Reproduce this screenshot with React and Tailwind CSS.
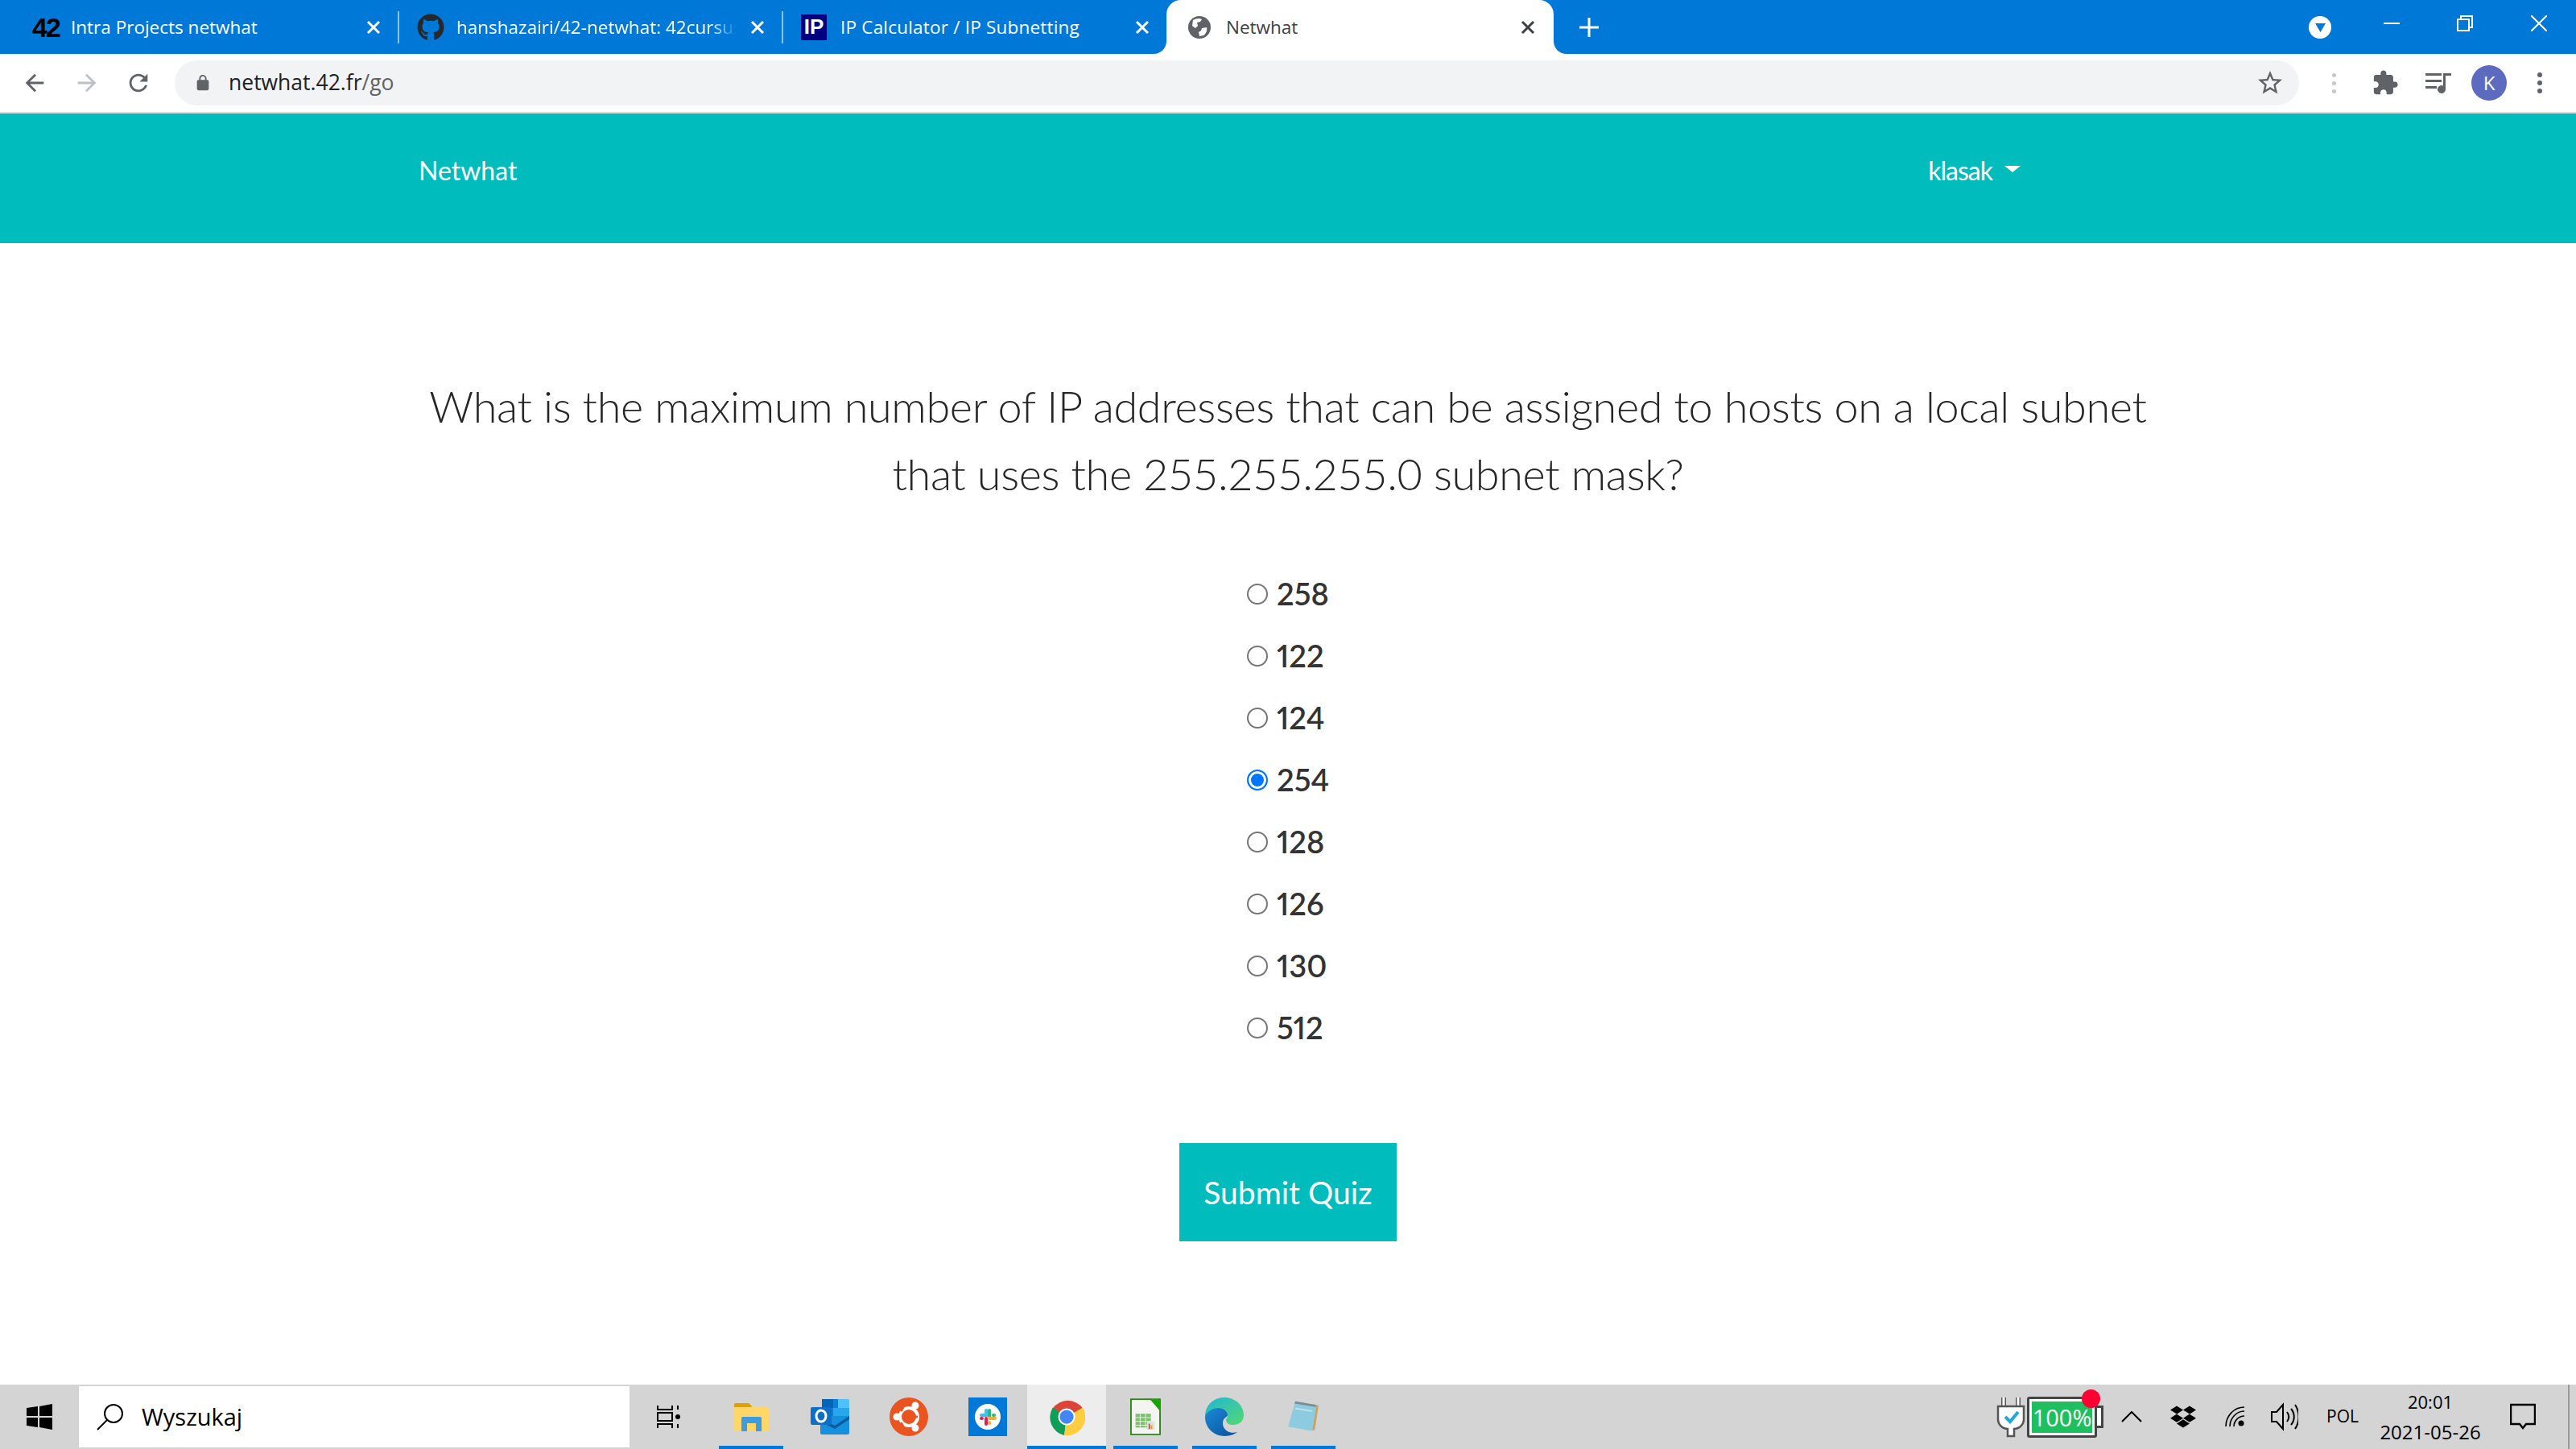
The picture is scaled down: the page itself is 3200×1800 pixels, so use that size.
import { FaGithub, FaDropbox } from 'react-icons/fa';

const options = [
  { value: '258' },
  { value: '122' },
  { value: '124' },
  { value: '254', checked: true },
  { value: '128' },
  { value: '126' },
  { value: '130' },
  { value: '512' },
];

const Mat = ({ d, className }) => (
  <svg viewBox="0 0 24 24" className={className} fill="currentColor">
    <path d={d} />
  </svg>
);

const TabClose = ({ className }) => (
  <svg viewBox="0 0 20 20" className={`w-[20px] h-[20px] ${className}`} fill="none" stroke="currentColor" strokeWidth="3">
    <path d="M3 3l14 14M17 3L3 17" />
  </svg>
);

const GlobeIcon = () => (
  <svg viewBox="0 0 28 28" className="w-[28px] h-[28px]">
    <circle cx="14" cy="14" r="14" fill="#5f6368" />
    <path d="M6 5c3-2 8-3 11-1l-2 3-4 1 1 4-3 3-4-3zM17 15l6-1c1 4-1 8-4 10l-5 1-1-5 3-2z" fill="#fff" />
  </svg>
);

const Tab = ({ width, pad, icon, title, fade, sep, textLeft, closeRight }) => (
  <div className={`relative flex items-center h-[67px] shrink-0 ${width} ${pad}`}>
    {icon}
    <span className={`overflow-hidden whitespace-nowrap text-white text-[22.5px] font-['Open_Sans',sans-serif] ${textLeft} ${fade ? 'w-[348px] [mask-image:linear-gradient(to_right,black_90%,transparent)]' : ''}`}>
      {title}
    </span>
    <TabClose className={`ml-auto text-white ${closeRight}`} />
    {sep && <div className="w-[2px] h-[40px] bg-[#8cc4ef] shrink-0" />}
  </div>
);

const TabStrip = () => (
  <div className="flex items-center h-[67px] bg-[#0078d7] shrink-0">
    <Tab
      width="w-[496px]"
      pad="pl-[40px]"
      textLeft="ml-[16px]"
      closeRight="mr-[20px]"
      sep
      title="Intra Projects netwhat"
      icon={<span className="w-[32px] text-center text-black text-[34px] leading-none font-black font-['Liberation_Sans',sans-serif] tracking-[-2px]">42</span>}
    />
    <Tab
      width="w-[477px]"
      pad="pl-[22px]"
      textLeft="ml-[15px]"
      closeRight="mr-[20px]"
      sep
      fade
      title="hanshazairi/42-netwhat: 42cursus"
      icon={<FaGithub className="w-[34px] h-[34px] text-[#24292e] shrink-0" />}
    />
    <Tab
      width="w-[476px]"
      pad="pl-[22px]"
      textLeft="ml-[17px] tracking-[0.2px]"
      closeRight="mr-[20px]"
      title="IP Calculator / IP Subnetting"
      icon={
        <span className="flex items-center justify-center w-[32px] h-[32px] bg-[#000080] text-white text-[26px] font-bold font-['Liberation_Sans',sans-serif] shrink-0">
          IP
        </span>
      }
    />
    <div className="relative flex items-center w-[481px] h-[67px] pl-[27px] bg-white rounded-t-[18px] shrink-0">
      <svg viewBox="0 0 16 16" className="absolute left-[-16px] bottom-0 w-[16px] h-[16px]">
        <path d="M16 0v16H0C9 16 16 9 16 0z" fill="#fff" />
      </svg>
      <svg viewBox="0 0 16 16" className="absolute right-[-16px] bottom-0 w-[16px] h-[16px]">
        <path d="M0 0v16h16C7 16 0 9 0 0z" fill="#fff" />
      </svg>
      <GlobeIcon />
      <span className="ml-[19px] text-[#3c4043] text-[22.5px] font-['Open_Sans',sans-serif]">Netwhat</span>
      <TabClose className="ml-auto mr-[22px] text-[#3c4043]" />
    </div>
    <svg viewBox="0 0 24 24" className="ml-[32px] w-[24px] h-[24px] text-white" fill="currentColor">
      <path d="M10.5 0h3v10.5H24v3H13.5V24h-3V13.5H0v-3h10.5z" />
    </svg>
    <div className="ml-auto flex items-center h-full">
      <div className="flex items-center justify-center w-[28px] h-[28px] rounded-full bg-white">
        <svg viewBox="0 0 14 12" className="w-[13px] h-[11px] mt-[2px]">
          <path d="M0 0h14L7 12z" fill="#0078d7" />
        </svg>
      </div>
      <div className="w-[20px] h-[2px] ml-[65px] mb-[10px] bg-white" />
      <svg viewBox="0 0 20 20" className="w-[20px] h-[20px] ml-[71px] mb-[10px]" fill="none" stroke="#fff" strokeWidth="2">
        <path d="M1 5h14v14H1zM5 5V1h14v14h-4" />
      </svg>
      <svg viewBox="0 0 20 20" className="w-[20px] h-[20px] ml-[72px] mr-[36px] mb-[10px]" fill="none" stroke="#fff" strokeWidth="2">
        <path d="M0 0l20 20M20 0L0 20" />
      </svg>
    </div>
  </div>
);

const Toolbar = () => (
  <div className="flex items-center h-[74px] bg-white border-b-2 border-[#dadce0] shrink-0">
    <Mat className="w-[34px] h-[34px] ml-[26px] text-[#5f6368]" d="M20 11H7.83l5.59-5.59L12 4l-8 8 8 8 1.41-1.41L7.83 13H20v-2z" />
    <Mat className="w-[34px] h-[34px] ml-[31px] text-[#bdc1c6] -scale-x-100" d="M20 11H7.83l5.59-5.59L12 4l-8 8 8 8 1.41-1.41L7.83 13H20v-2z" />
    <Mat className="w-[34px] h-[34px] ml-[30px] text-[#5f6368]" d="M17.65 6.35C16.2 4.9 14.21 4 12 4c-4.42 0-7.99 3.58-7.99 8s3.57 8 7.99 8c3.73 0 6.84-2.55 7.73-6h-2.08c-.82 2.33-3.04 4-5.65 4-3.31 0-6-2.69-6-6s2.69-6 6-6c1.66 0 3.14.69 4.22 1.78L13 11h7V4l-2.35 2.35z" />
    <div className="flex items-center w-[2639px] h-[56px] ml-[28px] pl-[24px] bg-[#f1f3f4] rounded-full">
      <Mat className="w-[22px] h-[22px] text-[#5f6368]" d="M18 8h-1V6c0-2.76-2.24-5-5-5S7 3.24 7 6v2H6c-1.1 0-2 .9-2 2v10c0 1.1.9 2 2 2h12c1.1 0 2-.9 2-2V10c0-1.1-.9-2-2-2zM9 6c0-1.66 1.34-3 3-3s3 1.34 3 3v2H9V6z" />
      <span className="ml-[21px] text-[26.5px] text-[#202124] font-['Open_Sans',sans-serif]">
        netwhat.42.fr<span className="text-[#5f6368]">/go</span>
      </span>
      <Mat className="ml-auto mr-[18px] w-[36px] h-[36px] text-[#5f6368]" d="M22 9.24l-7.19-.62L12 2 9.19 8.63 2 9.24l5.46 4.73L5.82 21 12 17.27 18.18 21l-1.63-7.03L22 9.24zM12 15.4l-3.76 2.27 1-4.28-3.32-2.88 4.38-.38L12 6.1l1.71 4.04 4.38.38-3.32 2.88 1 4.28L12 15.4z" />
    </div>
    <div className="flex flex-col gap-[5px] ml-[41px]">
      <div className="w-[5px] h-[5px] rounded-full bg-[#c4c6c9]" />
      <div className="w-[5px] h-[5px] rounded-full bg-[#c4c6c9]" />
      <div className="w-[5px] h-[5px] rounded-full bg-[#c4c6c9]" />
    </div>
    <Mat className="w-[34px] h-[34px] ml-[44px] text-[#5f6368]" d="M20.5 11H19V7c0-1.1-.9-2-2-2h-4V3.5C13 2.12 11.88 1 10.5 1S8 2.12 8 3.5V5H4c-1.1 0-1.99.9-1.99 2v3.8H3.5c1.49 0 2.7 1.21 2.7 2.7s-1.21 2.7-2.7 2.7H2V20c0 1.1.9 2 2 2h3.8v-1.5c0-1.49 1.21-2.7 2.7-2.7 1.49 0 2.7 1.21 2.7 2.7V22H17c1.1 0 2-.9 2-2v-4h1.5c1.38 0 2.5-1.12 2.5-2.5S21.88 11 20.5 11z" />
    <svg viewBox="0 0 32 26" className="w-[32px] h-[26px] ml-[33px] text-[#5f6368]" fill="currentColor">
      <path d="M0 1h20v3H0zM0 9h20v3H0zM0 17h14v3H0z" />
      <path d="M22 1h10v3h-7v17a5 5 0 1 1-3-4.6z" />
    </svg>
    <div className="flex items-center justify-center w-[44px] h-[44px] ml-[25px] rounded-full bg-[#5c6bc0] text-white text-[24px] font-['Open_Sans',sans-serif]">
      K
    </div>
    <div className="flex flex-col gap-[4px] ml-[38px]">
      <div className="w-[6px] h-[6px] rounded-full bg-[#5f6368]" />
      <div className="w-[6px] h-[6px] rounded-full bg-[#5f6368]" />
      <div className="w-[6px] h-[6px] rounded-full bg-[#5f6368]" />
    </div>
  </div>
);

const Navbar = () => (
  <nav className="flex items-center justify-between h-[161px] pl-[520px] pr-[690px] pb-[20px] bg-[#00bcbc] text-white text-[32px] font-['Lato',sans-serif] shrink-0">
    <a>Netwhat</a>
    <a className="flex items-center tracking-[-1px]">
      klasak
      <span className="ml-[15px] mb-[4px] border-x-[10px] border-x-transparent border-t-[8px] border-t-white" />
    </a>
  </nav>
);

const Quiz = () => (
  <main className="flex-1 flex flex-col items-center pt-[161px] bg-white text-[#333] font-['Lato',sans-serif]">
    <h1 className="text-center whitespace-nowrap text-[54px] leading-[84px] font-light tracking-[-0.35px] text-[#262626]">
      What is the maximum number of IP addresses that can be assigned to hosts on a local subnet
      <br />
      that uses the 255.255.255.0 subnet mask?
    </h1>
    <div className="w-[102px] mt-[68px]">
      {options.map((o) => (
        <label key={o.value} className="flex items-center h-[77px] text-[38px] font-semibold proportional-nums">
          <input
            type="radio"
            name="answer"
            defaultChecked={o.checked}
            className="appearance-none w-[26px] h-[26px] m-0 shrink-0 rounded-full border-2 border-[#767676] checked:border-[#0075ff] checked:bg-[#0075ff] checked:shadow-[inset_0_0_0_3px_white]"
          />
          <span className="ml-[11px]">{o.value}</span>
        </label>
      ))}
    </div>
    <button className="w-[270px] h-[122px] mt-[105px] bg-[#00bcbc] text-white text-[39px]">Submit Quiz</button>
  </main>
);

const WinIcon = () => (
  <svg viewBox="0 0 32 32" className="w-[32px] h-[32px]" fill="#000">
    <path d="M0 5l14-2v12H0zM16 3l16-3v15H16zM0 17h14v12L0 27zM16 17h16v15l-16-3z" />
  </svg>
);

const Explorer = () => (
  <svg viewBox="0 0 43 35" className="w-[43px] h-[35px]">
    <path d="M0 2a2 2 0 0 1 2-2h16l4 4-2 3H0z" fill="#e0a000" />
    <path d="M0 5h41a2 2 0 0 1 2 2v26a2 2 0 0 1-2 2H2a2 2 0 0 1-2-2z" fill="#ffd768" />
    <path d="M9 35V19a2 2 0 0 1 2-2h21a2 2 0 0 1 2 2v16h-7V25H16v10z" fill="#3d9be0" />
  </svg>
);

const Outlook = () => (
  <svg viewBox="0 0 48 44" className="w-[48px] h-[44px]">
    <path d="M14 0h28v11H14z" fill="#0364b8" />
    <path d="M28 0h14v11H28z" fill="#0a7fd6" />
    <path d="M34 0h12a2 2 0 0 1 2 2v12H34z" fill="#50c0fa" />
    <path d="M14 11h14v10H14z" fill="#0a7fd6" />
    <path d="M28 11h20v10H28z" fill="#28a8ea" />
    <path d="M12 21l36 0v21a2 2 0 0 1-2 2H14a2 2 0 0 1-2-2z" fill="#1490df" />
    <path d="M12 24l18 9 18-12v4L30 37 12 28z" fill="#0a5a9e" />
    <rect x="0" y="10" width="26" height="22" rx="2" fill="#0f6fc6" />
    <ellipse cx="13" cy="21" rx="6" ry="7" fill="none" stroke="#fff" strokeWidth="3" />
  </svg>
);

const Ubuntu = () => (
  <svg viewBox="0 0 48 48" className="w-[48px] h-[48px]">
    <circle cx="24" cy="24" r="24" fill="#e95420" />
    <circle cx="24" cy="24" r="11" fill="none" stroke="#fff" strokeWidth="4" />
    <path d="M17 12l-3 5M17 36l-3-5M35 24h-6" stroke="#e95420" strokeWidth="3" />
    <circle cx="9" cy="24" r="4.5" fill="#fff" />
    <circle cx="32" cy="10" r="4.5" fill="#fff" />
    <circle cx="32" cy="38" r="4.5" fill="#fff" />
  </svg>
);

const Slack = () => (
  <div className="flex items-center justify-center w-[48px] h-[48px] bg-[#0078d7]">
    <svg viewBox="0 0 32 32" className="w-[32px] h-[32px]">
      <circle cx="16" cy="16" r="16" fill="#fff" />
      <path d="M8 14h7" stroke="#36c5f0" strokeWidth="4" strokeLinecap="round" />
      <path d="M14 8v3" stroke="#36c5f0" strokeWidth="4" strokeLinecap="round" />
      <path d="M18 8v7" stroke="#2eb67d" strokeWidth="4" strokeLinecap="round" />
      <path d="M24 14h-1" stroke="#2eb67d" strokeWidth="4" strokeLinecap="round" />
      <path d="M18 18h7" stroke="#ecb22e" strokeWidth="4" strokeLinecap="round" />
      <path d="M18 24v-1" stroke="#ecb22e" strokeWidth="4" strokeLinecap="round" />
      <path d="M14 18v7" stroke="#e01e5a" strokeWidth="4" strokeLinecap="round" />
      <path d="M8 18h1" stroke="#e01e5a" strokeWidth="4" strokeLinecap="round" />
    </svg>
  </div>
);

const Chrome = () => (
  <svg viewBox="0 0 48 48" className="w-[46px] h-[46px]">
    <path d="M24 24L6 13A24 24 0 0 1 45 13z" fill="#db4437" />
    <path d="M24 24L6 12A24 24 0 0 0 21 48z" fill="#0f9d58" />
    <path d="M24 24l21-12A24 24 0 0 1 21 48z" fill="#ffcd40" />
    <circle cx="24" cy="24" r="11" fill="#fff" />
    <circle cx="24" cy="24" r="9" fill="#4285f4" />
  </svg>
);

const Calc = () => (
  <svg viewBox="0 0 40 48" className="w-[38px] h-[48px]">
    <path d="M1 1h26l12 13v33H1z" fill="#f4f4f0" stroke="#2a8a10" strokeWidth="2" />
    <path d="M26 0h14v18z" fill="#18a303" />
    <path d="M7 20h20v18H7z" fill="#7cc16b" />
    <path d="M7 25h20M7 30h20M7 35h20M13 20v18M20 20v18" stroke="#e8f4e4" strokeWidth="1" />
    <path d="M22 30h10v11H22z" fill="#dfe3df" />
    <path d="M24 40v-7h2v7z" fill="#d24d3f" />
    <path d="M27 40v-5h2v5z" fill="#e0a030" />
  </svg>
);

const Edge = () => (
  <svg viewBox="0 0 48 48" className="w-[48px] h-[48px]">
    <defs>
      <linearGradient id="edge-top" x1="0" y1="0" x2="1" y2="1">
        <stop offset="0" stopColor="#1fb6d8" />
        <stop offset="1" stopColor="#54d96f" />
      </linearGradient>
      <linearGradient id="edge-low" x1="0" y1="0" x2="1" y2="1">
        <stop offset="0" stopColor="#1a8ad8" />
        <stop offset="1" stopColor="#0c4f9a" />
      </linearGradient>
    </defs>
    <path d="M24 0c14 0 24 10 24 22 0 8-6 12-13 12-6 0-9-3-9-6 0-2 2-3 2-6 0-5-5-9-11-9C9 13 1 22 0 24 0 10 10 0 24 0z" fill="url(#edge-top)" />
    <path d="M0 24c1-5 8-11 17-11 6 0 11 4 11 9 0 2-6 3-6 10 0 8 8 14 18 11-4 3-10 5-16 5C11 48 0 38 0 24z" fill="url(#edge-low)" />
  </svg>
);

const Notepad = () => (
  <svg viewBox="0 0 48 48" className="w-[45px] h-[42px]">
    <path d="M12 2l30 5-6 37-34-6z" fill="#8ccbe0" />
    <path d="M36 44l6-37 3 1-5 34z" fill="#c9a46a" />
    <path d="M12 2l30 5-1 3-30-5z" fill="#7e8a90" />
    <path d="M12 12l24 4" stroke="#cbe7ef" strokeWidth="1.5" />
  </svg>
);

const AppSlot = ({ children, active, running }) => (
  <div className={`relative flex items-center justify-center h-full w-[98px] shrink-0 ${active ? 'bg-[#ededed]' : ''}`}>
    {children}
    {(running || active) && (
      <div className={`absolute bottom-0 h-[4px] bg-[#0078d7] ${active ? 'inset-x-0' : 'inset-x-[9px]'}`} />
    )}
  </div>
);

const BatteryMeter = () => (
  <div className="relative flex items-center w-[95px] h-[51px]">
    <div className="flex items-center justify-center w-[87px] h-[51px] border-[3px] border-[#444] rounded-[3px] bg-white p-[3px]">
      <div className="flex items-center justify-center w-full h-full bg-[#1fbf60] text-white text-[29px] leading-none font-['Open_Sans',sans-serif]">
        100%
      </div>
    </div>
    <div className="w-[8px] h-[28px] bg-white border-y-[3px] border-r-[3px] border-[#444]" />
    <div className="absolute right-[4px] top-[-9px] w-[23px] h-[23px] rounded-full bg-[#ff0033]" />
  </div>
);

const Taskbar = () => (
  <footer className="flex items-center h-[80px] bg-[#d4d4d4] text-black font-['Open_Sans',sans-serif] shrink-0">
    <div className="flex items-center justify-center w-[98px] h-full shrink-0">
      <WinIcon />
    </div>
    <div className="flex items-center w-[684px] h-[76px] pl-[22px] bg-white shrink-0">
      <svg viewBox="0 0 34 34" className="w-[34px] h-[34px]" fill="none" stroke="#000" strokeWidth="2">
        <circle cx="21" cy="13" r="11" />
        <path d="M13 21L1 33" />
      </svg>
      <span className="ml-[22px] text-[29px]">Wyszukaj</span>
    </div>
    <div className="flex items-center justify-center w-[70px] h-full ml-[13px] shrink-0">
      <svg viewBox="0 0 30 30" className="w-[30px] h-[30px]" fill="none" stroke="#000" strokeWidth="2">
        <path d="M2 1v5h18V1M2 29v-5h18v5M2 10h18v10H2zM27 1v5M27 24v5" />
        <circle cx="27" cy="15" r="3" fill="#000" stroke="none" />
      </svg>
    </div>
    <div className="flex items-stretch h-full ml-[19px]">
      <AppSlot running>
        <Explorer />
      </AppSlot>
      <AppSlot>
        <Outlook />
      </AppSlot>
      <AppSlot>
        <Ubuntu />
      </AppSlot>
      <AppSlot>
        <Slack />
      </AppSlot>
      <AppSlot active>
        <Chrome />
      </AppSlot>
      <AppSlot running>
        <Calc />
      </AppSlot>
      <AppSlot running>
        <Edge />
      </AppSlot>
      <AppSlot running>
        <Notepad />
      </AppSlot>
    </div>
    <div className="flex items-center h-full ml-auto">
      <svg viewBox="0 0 36 52" className="w-[36px] h-[52px] mr-[2px]">
        <path d="M9 2v12M27 2v12" stroke="#555" strokeWidth="6" />
        <path d="M9 2v12M27 2v12" stroke="#fff" strokeWidth="3" />
        <path d="M2 13h32v16a12 12 0 0 1-12 12v9h-8v-9A12 12 0 0 1 2 29z" fill="#fff" stroke="#555" strokeWidth="2.5" />
        <path d="M11 26l6 6 10-12" fill="none" stroke="#1ea7e0" strokeWidth="4" />
      </svg>
      <BatteryMeter />
      <svg viewBox="0 0 26 14" className="w-[26px] h-[14px] ml-[22px]" fill="none" stroke="#000" strokeWidth="2">
        <path d="M1 13L13 1l12 12" />
      </svg>
      <FaDropbox className="w-[32px] h-[32px] ml-[35px]" />
      <svg viewBox="0 0 26 26" className="w-[26px] h-[26px] ml-[36px]" fill="none" stroke="#000" strokeWidth="1.6">
        <path d="M1 25C1 12 11 1 24 1M6 25C6 15 14 6 24 6M11 25c0-7 6-13 13-13" />
        <circle cx="20" cy="21" r="3.5" fill="#000" stroke="none" />
      </svg>
      <svg viewBox="0 0 34 38" className="w-[34px] h-[38px] ml-[31px]" fill="none" stroke="#000" strokeWidth="2">
        <path d="M1 13h6l8-9v30l-8-9H1z" />
        <path d="M20 13c3 4 3 8 0 12M25 9c5 6 5 14 0 20M30 4c6 9 6 21 0 30" />
      </svg>
      <span className="w-[72px] ml-[19px] text-center text-[21px]">POL</span>
      <div className="flex flex-col items-center justify-center w-[134px] ml-[6px] leading-[37px]">
        <span className="text-[22px]">20:01</span>
        <span className="text-[24px]">2021-05-26</span>
      </div>
      <svg viewBox="0 0 32 34" className="w-[32px] h-[34px] ml-[32px]" fill="none" stroke="#000" strokeWidth="2.5">
        <path d="M1 2h30v24H20l-4 5-4-5H1z" />
      </svg>
      <div className="w-[2px] h-full ml-[40px] mr-[8px] bg-[#9a9a9a]" />
    </div>
  </footer>
);

const App = () => {
  return (
    <div className="flex flex-col w-[3200px] h-[1800px] overflow-hidden bg-white">
      <TabStrip />
      <Toolbar />
      <Navbar />
      <Quiz />
      <Taskbar />
    </div>
  );
};

export default App;
